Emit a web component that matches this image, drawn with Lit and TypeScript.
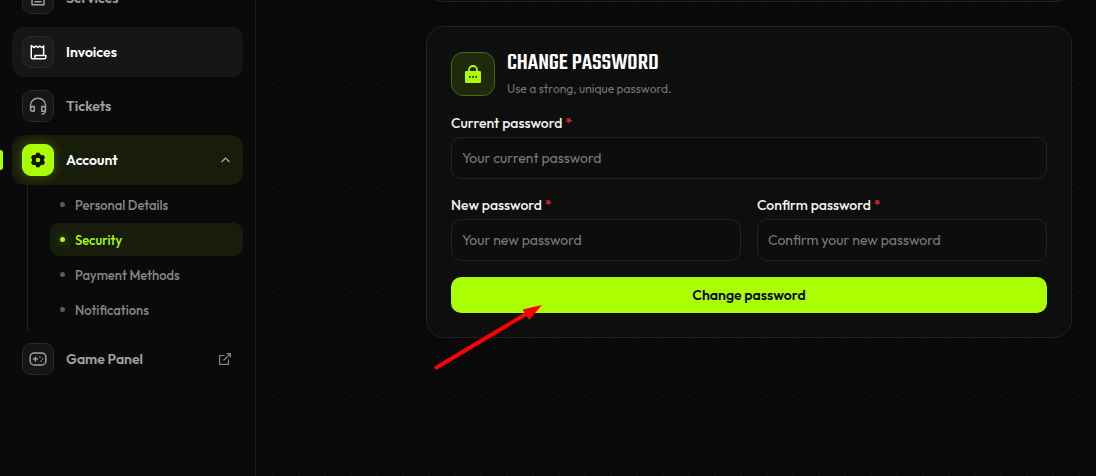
import { LitElement, html, css, svg, nothing } from "lit";
import { customElement } from "lit/decorators.js";
import { classMap } from "lit/directives/class-map.js";

const icons = {
  services: svg`<path d="M4 3h16v18H4zM8 17h8M8 13h8" />`,
  invoice: svg`<path d="M19.500 15V4L17 6l-2.600-2L12 6 9.400 4 7 6 3 3.500V19a2 2 0 0 0 2 2h15.500a2 2 0 0 0 2-2v-2.500H8V21" />`,
  headset: svg`<path d="M2 16v-5a10 9.500 0 0 1 20 0v7a4.500 4.500 0 0 1-4.500 4.500M2 15.500a3 3 0 0 1 3-3h2v6.500H5a3 3 0 0 1-3-3zM22 15.500a3 3 0 0 0-3-3h-2v6.500h2a3 3 0 0 0 3-3z" />`,
  gamepad: svg`<rect x="1.500" y="4" width="21" height="16" rx="5.500" /><path d="M8.500 9.500v5M6 12h5M14.500 9.500h.1M18 12h.1M16 14.800h.1" />`,
};

const links = [
  { label: "Services", icon: icons.services, hot: false },
  { label: "Invoices", icon: icons.invoice, hot: true },
  { label: "Tickets", icon: icons.headset, hot: false },
];

const accountLinks = ["Personal Details", "Security", "Payment Methods", "Notifications"];

@customElement("side-nav")
export class SideNav extends LitElement {
  static styles = css`
    :host {
      box-sizing: border-box;
      width: 256px;
      flex: none;
      border-right: 1px solid #1b1b1b;
      background: #0a0a0a;
      overflow: hidden;
    }
    .nav {
      display: flex;
      flex-direction: column;
      gap: 4px;
      padding: 0 12px;
      margin-top: -27px;
    }
    .item {
      position: relative;
      box-sizing: border-box;
      display: flex;
      align-items: center;
      gap: 12px;
      width: 100%;
      height: 50px;
      padding: 0 12px 0 10px;
      border: 0;
      border-radius: 12px;
      background: none;
      color: #a0a0a0;
      font: 600 14px/20px "Outfit", "Lato", sans-serif;
      text-align: left;
      text-decoration: none;
    }
    .item.hot {
      background: #161616;
      color: #fff;
    }
    .item.open {
      background: #171c0b;
      color: #fff;
    }
    .marker {
      position: absolute;
      left: -12px;
      top: 15px;
      width: 3px;
      height: 20px;
      border-radius: 0 3px 3px 0;
      background: #aaff00;
    }
    .tile {
      box-sizing: border-box;
      display: grid;
      place-items: center;
      width: 32px;
      height: 32px;
      border: 1px solid #292929;
      border-radius: 9px;
      background: #161616;
    }
    .hot .tile {
      background: #1c1c1c;
    }
    .open .tile {
      border-color: #aaff00;
      background: #aaff00;
      color: #11160a;
      box-shadow: 0 0 12px rgba(170, 255, 0, 0.3);
    }
    .glyph {
      width: 18px;
      height: 18px;
      fill: none;
      stroke: currentColor;
      stroke-width: 2;
      stroke-linecap: round;
      stroke-linejoin: round;
    }
    .gear {
      width: 18px;
      height: 18px;
    }
    .text {
      flex: 1;
    }
    .end {
      width: 12px;
      height: 12px;
      fill: none;
      stroke: #858585;
      stroke-width: 1.2;
    }
    .sub {
      display: flex;
      flex-direction: column;
      gap: 2px;
      margin: -4px 0 0 15px;
      padding: 3px 0 4px 22px;
      border-left: 1px solid #222;
      list-style: none;
    }
    .subitem {
      display: flex;
      align-items: center;
      gap: 10px;
      height: 33px;
      padding-left: 10px;
      border-radius: 9px;
      color: #858585;
      font: 500 13px/18px "Outfit", "Lato", sans-serif;
      text-decoration: none;
    }
    .subitem.current {
      background: #171c0b;
      color: #aaff00;
    }
    .dot {
      width: 5px;
      height: 5px;
      border-radius: 50%;
      background: #5a5a5a;
    }
    .current .dot {
      background: #aaff00;
      box-shadow: 0 0 8px rgba(170, 255, 0, 0.6);
    }
  `;

  render() {
    return html`<nav class="nav">
      ${links.map(
        (l) => html`<a href="#" class=${classMap({ item: true, hot: l.hot })}>
          <span class="tile"><svg class="glyph" viewBox="0 0 24 24">${l.icon}</svg></span>
          <span class="text">${l.label}</span>
        </a>`
      )}
      <button class="item open" type="button" aria-expanded="true">
        <span class="marker"></span>
        <span class="tile">
          <svg class="gear" viewBox="0 0 24 24">
            <circle cx="12" cy="12" r="8" fill="currentColor" />
            <path d="M12 5v14M5.900 8.500l12.200 7M18.100 8.500l-12.200 7" stroke="currentColor" stroke-width="6" stroke-linecap="round" />
            <circle cx="12" cy="12" r="2.900" fill="#aaff00" />
          </svg>
        </span>
        <span class="text">Account</span>
        <svg class="end" viewBox="0 0 12 12"><path d="M2.500 8l4-4 4 4" stroke="#b0b0b0" /></svg>
      </button>
      <ul class="sub">
        ${accountLinks.map(
          (label) => html`<li>
            <a
              href="#"
              class=${classMap({ subitem: true, current: label === "Security" })}
              aria-current=${label === "Security" ? "page" : nothing}
              ><span class="dot"></span>${label}</a
            >
          </li>`
        )}
      </ul>
      <a href="#" class="item">
        <span class="tile"><svg class="glyph" viewBox="0 0 24 24">${icons.gamepad}</svg></span>
        <span class="text">Game Panel</span>
        <svg class="end" viewBox="0 0 12 12"><path d="M5.500 2.500H.6v8.900h8.900V6.500M7.500.6h3.900v3.900M11.400.6L4.500 7.500" /></svg>
      </a>
    </nav>`;
  }
}

@customElement("password-card")
export class PasswordCard extends LitElement {
  static styles = css`
    :host {
      display: block;
      box-sizing: border-box;
      padding: 24px;
      border: 1px solid #222;
      border-radius: 18px;
      background: #0e0e0e;
      font-family: "Outfit", "Lato", sans-serif;
    }
    .head {
      display: flex;
      gap: 12px;
      align-items: center;
      height: 46px;
      margin-bottom: 16px;
    }
    .badge {
      box-sizing: border-box;
      display: grid;
      place-items: center;
      width: 44px;
      height: 44px;
      border: 1px solid #48690d;
      border-radius: 12px;
      background: #20290c;
    }
    .lock {
      width: 16px;
      height: 18px;
    }
    .title {
      margin: 0;
      color: #fff;
      font: 500 24px/26px "Teko", "Liberation Sans Narrow", "Roboto Condensed", "Liberation Sans", sans-serif;
      text-transform: uppercase;
    }
    .note {
      margin: 4px 0 0;
      color: #757575;
      font-size: 12px;
      line-height: 18px;
    }
    .form {
      display: grid;
      grid-template-columns: 1fr 1fr;
      gap: 16px;
    }
    .wide {
      grid-column: 1 / -1;
    }
    .label {
      display: block;
      margin-bottom: 4px;
      color: #f2f2f2;
      font-size: 14px;
      font-weight: 500;
      line-height: 20px;
    }
    .star {
      color: #e02b35;
    }
    .box {
      display: block;
      box-sizing: border-box;
      width: 100%;
      height: 42px;
      padding: 0 10px;
      border: 1px solid #222;
      border-radius: 10px;
      background: #0d0d0d;
      color: #fff;
      font: 400 14px/20px "Outfit", "Lato", sans-serif;
    }
    .box::placeholder {
      color: #7a7a7a;
      opacity: 1;
    }
    .submit {
      height: 36px;
      border: 0;
      border-radius: 10px;
      background: #aaff00;
      color: #0a0a0a;
      font: 600 14px/20px "Outfit", "Lato", sans-serif;
    }
  `;

  private field(id: string, label: string, placeholder: string, wide = false) {
    return html`<div class=${classMap({ wide })}>
      <label class="label" for=${id}>${label} <span class="star">*</span></label>
      <input class="box" id=${id} type="password" placeholder=${placeholder} required />
    </div>`;
  }

  render() {
    return html`
      <header class="head">
        <span class="badge">
          <svg class="lock" viewBox="0 0 16 18">
            <path d="M4 8V5a4 4 0 0 1 8 0v3" fill="none" stroke="#aaff00" stroke-width="1.800" />
            <rect y="6" width="16" height="12" rx="1.200" fill="#aaff00" />
            <path d="M4 11h1.700v1.700H4zM7.200 11h1.700v1.700H7.200zM10.400 11h1.700v1.700h-1.700z" fill="#20290c" />
          </svg>
        </span>
        <div>
          <h2 class="title">Change password</h2>
          <p class="note">Use a strong, unique password.</p>
        </div>
      </header>
      <form class="form">
        ${this.field("current", "Current password", "Your current password", true)}
        ${this.field("new", "New password", "Your new password")}
        ${this.field("confirm", "Confirm password", "Confirm your new password")}
        <button class="submit wide" type="button">Change password</button>
      </form>
    `;
  }
}

@customElement("app-root")
export class AppRoot extends LitElement {
  static styles = css`
    :host {
      position: relative;
      display: flex;
      min-height: 100vh;
      background: #090909;
      overflow: hidden;
    }
    .main {
      flex: 1;
      min-width: 0;
      display: flex;
      flex-direction: column;
      gap: 24px;
      padding: 0 24px 24px 170px;
      background: radial-gradient(circle at 13px 13px, #121212 0 1px, transparent 1px) 4px -7px / 26px 26px;
    }
    .previous {
      box-sizing: border-box;
      height: 32px;
      margin-top: -30px;
      border: 1px solid #222;
      border-radius: 18px;
      background: #0e0e0e;
    }
    .arrow {
      position: absolute;
      left: 430px;
      top: 300px;
      width: 116px;
      height: 74px;
    }
  `;

  render() {
    return html`
      <side-nav></side-nav>
      <main class="main">
        <div class="previous"></div>
        <password-card></password-card>
      </main>
      <svg class="arrow" viewBox="0 0 116 74" aria-hidden="true">
        <path d="M6.500 67.500L96 14" stroke="#ff0000" stroke-width="4" stroke-linecap="round" />
        <path d="M112 5L92.500 9.500L99 20z" fill="#ff0000" />
      </svg>
    `;
  }
}
